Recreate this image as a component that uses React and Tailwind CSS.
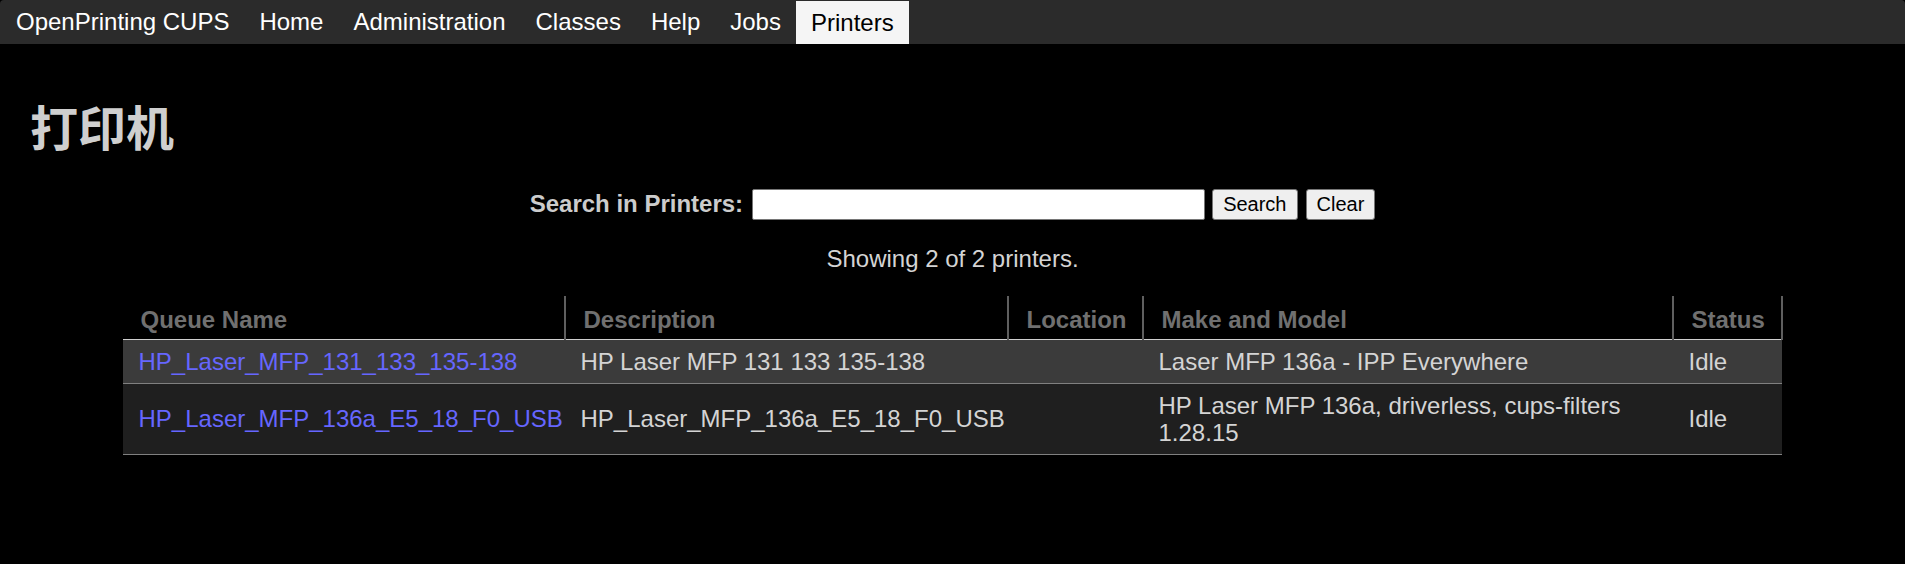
import React from "react";

const navItems = ["Home", "Administration", "Classes", "Help", "Jobs"];

const rows = [
  {
    name: "HP_Laser_MFP_131_133_135-138",
    desc: "HP Laser MFP 131 133 135-138",
    loc: "",
    model: "Laser MFP 136a - IPP Everywhere",
    status: "Idle",
    bg: "bg-[#3b3b3b]",
  },
  {
    name: "HP_Laser_MFP_136a_E5_18_F0_USB",
    desc: "HP_Laser_MFP_136a_E5_18_F0_USB",
    loc: "",
    model: "HP Laser MFP 136a, driverless, cups-filters 1.28.15",
    status: "Idle",
    bg: "bg-[#1f1f1f]",
  },
];

export default function App() {
  return (
    <div className="min-h-[564px] w-full bg-black text-[#d4d4d4] font-['Liberation_Sans',Arial,sans-serif]">
      <nav className="flex h-[44px] items-stretch rounded-t-[4px] bg-[#2b2b2b] text-[24px] text-white">
        <a className="flex items-center pl-4 pr-[15px] whitespace-nowrap">OpenPrinting CUPS</a>
        {navItems.map((item) => (
          <a key={item} className="flex items-center px-[15px] whitespace-nowrap">
            {item}
          </a>
        ))}
        <a className="mt-px flex items-center bg-[#f5f5f5] px-[15px] text-black">Printers</a>
      </nav>

      <h1 className="ml-[30px] mt-[57px] text-[48px] leading-[48px] font-bold text-[#cfcfcf] font-['Noto_Sans_CJK_SC',sans-serif]">
        打印机
      </h1>

      <form className="mt-[37px] flex items-center justify-center" onSubmit={(e) => e.preventDefault()}>
        <label className="text-[24px] font-bold text-[#cccccc]">Search in Printers:</label>
        <input
          type="text"
          className="ml-[9px] h-[31px] w-[453px] rounded-[2px] border border-[#767676] bg-white"
        />
        <button
          type="button"
          className="ml-[7px] h-[31px] rounded-[3px] border border-[#767676] bg-[#efefef] px-[10px] text-[20px] leading-none text-black"
        >
          Search
        </button>
        <button
          type="button"
          className="ml-[8px] h-[31px] rounded-[3px] border border-[#767676] bg-[#efefef] px-[10px] text-[20px] leading-none text-black"
        >
          Clear
        </button>
      </form>

      <p className="mt-[23px] text-center text-[24px] leading-[27.6px] text-[#d4d4d4]">
        Showing 2 of 2 printers.
      </p>

      <table className="mx-auto mt-[23px] w-[1659px] table-fixed border-collapse text-[24px] leading-[27px]">
        <colgroup>
          <col className="w-[442px]" />
          <col className="w-[443px]" />
          <col className="w-[135px]" />
          <col className="w-[530px]" />
          <col className="w-[109px]" />
        </colgroup>
        <thead>
          <tr className="border-b border-[#cfcfcf]">
            {[
              ["Queue Name", "text-left"],
              ["Description", "text-left"],
              ["Location", "text-right"],
              ["Make and Model", "text-left"],
              ["Status", "text-right"],
            ].map(([h, align]) => (
              <th
                key={h}
                className={`border-r-2 border-r-[#5f5f5f] px-[18px] pt-[10px] pb-[6px] font-bold text-[#707070] ${align}`}
              >
                {h}
              </th>
            ))}
          </tr>
        </thead>
        <tbody>
          {rows.map((r) => (
            <tr key={r.name} className={`${r.bg} border-b border-[#808080]`}>
              <td className="px-4 py-2 align-middle">
                <a className="text-[#6666ff]">{r.name}</a>
              </td>
              <td className="px-4 py-2 align-middle">{r.desc}</td>
              <td className="px-4 py-2 align-middle">{r.loc}</td>
              <td className="px-4 py-2 align-middle">{r.model}</td>
              <td className="px-4 py-2 align-middle">{r.status}</td>
            </tr>
          ))}
        </tbody>
      </table>
    </div>
  );
}
